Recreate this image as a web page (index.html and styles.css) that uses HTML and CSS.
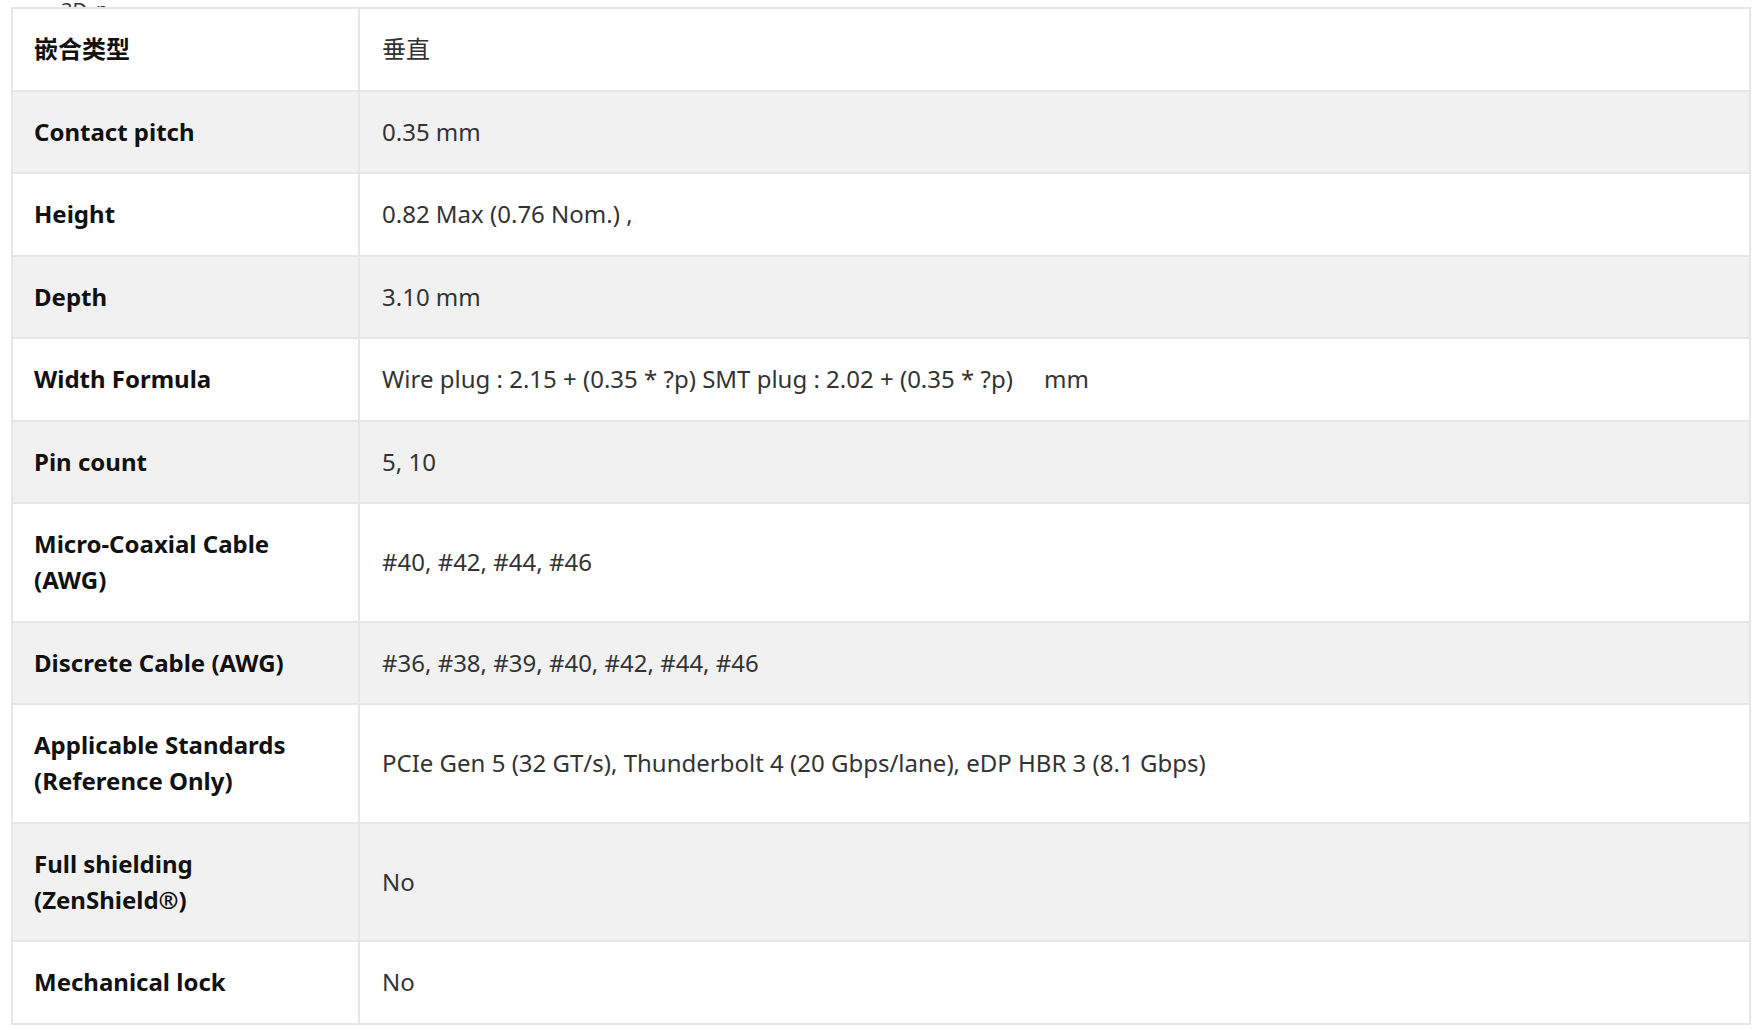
FILE: index.html
```html
<!DOCTYPE html>
<html lang="zh">
<head>
<meta charset="utf-8">
<title>Specifications</title>
<link rel="stylesheet" href="styles.css">
</head>
<body>
<div class="page">
  <div class="caption">3D_p</div>
  <table class="spec">
    <tbody>
      <tr><th>嵌合类型</th><td>垂直</td></tr>
      <tr><th>Contact pitch</th><td>0.35 mm</td></tr>
      <tr><th>Height</th><td>0.82 Max (0.76 Nom.) ,</td></tr>
      <tr><th>Depth</th><td>3.10 mm</td></tr>
      <tr><th>Width Formula</th><td><span class="cond">Wire plug : 2.15 + (0.35 * ?p) SMT plug : 2.02 + (0.35 * ?p)&nbsp;&nbsp;&nbsp;&nbsp; mm</span></td></tr>
      <tr><th>Pin count</th><td>5, 10</td></tr>
      <tr><th>Micro-Coaxial Cable<br>(AWG)</th><td>#40, #42, #44, #46</td></tr>
      <tr><th>Discrete Cable (AWG)</th><td>#36, #38, #39, #40, #42, #44, #46</td></tr>
      <tr><th>Applicable Standards<br>(Reference Only)</th><td>PCIe Gen 5 (32 GT/s), Thunderbolt 4 (20 Gbps/lane), eDP HBR 3 (8.1 Gbps)</td></tr>
      <tr><th>Full shielding<br>(ZenShield®)</th><td>No</td></tr>
      <tr><th>Mechanical lock</th><td>No</td></tr>
    </tbody>
  </table>
</div>
</body>
</html>
```
FILE: styles.css
```css
html, body {
  margin: 0;
  padding: 0;
  background: #ffffff;
}
body {
  font-family: "Noto Sans", "Noto Sans CJK SC", sans-serif;
  color: #333333;
  overflow: hidden;
}
.page {
  padding: 0 0 0 11px;
}
.caption {
  height: 7px;
  overflow: hidden;
  font-size: 20px;
  line-height: 20px;
  margin: 0;
  padding-left: 50px;
  color: #333;
}
.spec {
  border-collapse: collapse;
  width: 1740px;
  border: 2px solid #e6e6e6;
}
.spec th,
.spec td {
  border: 2px solid #e6e6e6;
  padding: 22.25px 20px 22.25px 21px;
  font-size: 24px;
  line-height: 36px;
  vertical-align: middle;
  text-align: left;
}
.spec th {
  width: 304px;
  font-weight: 700;
  color: #111111;
}
.spec td {
  padding-left: 22px;
  font-weight: 400;
  color: #333333;
}
.spec tr:nth-child(even) th,
.spec tr:nth-child(even) td {
  background: #f1f1f1;
}
.cond {
  font-stretch: semi-condensed;
}
```
